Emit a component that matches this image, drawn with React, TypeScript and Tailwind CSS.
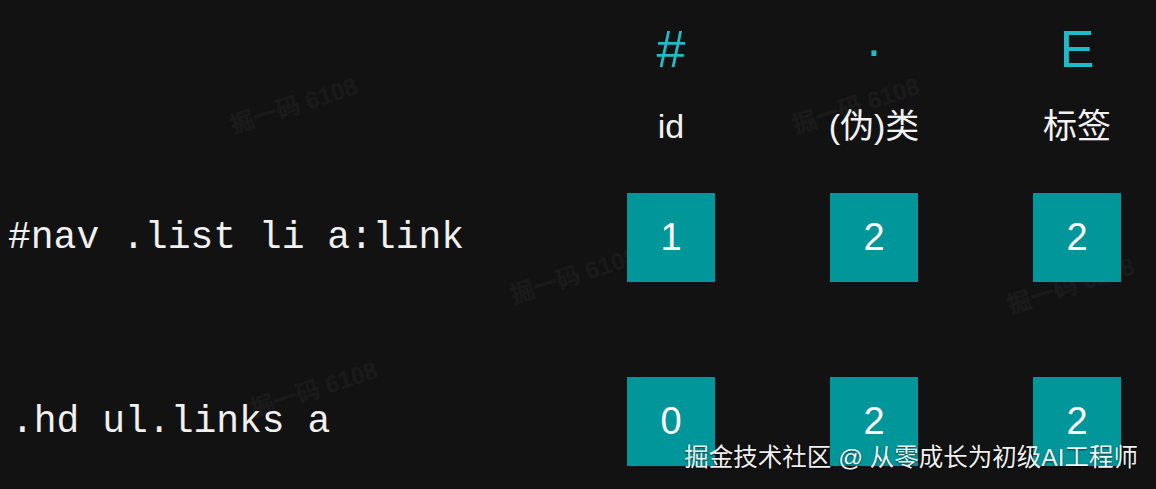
import React from 'react';

const cols = [
  { sym: '#', label: 'id' },
  { sym: '·', label: '(伪)类' },
  { sym: 'E', label: '标签' },
];

const rows = [
  { code: '#nav .list li a:link', vals: [1, 2, 2], pad: 'pl-[8px]' },
  { code: '.hd ul.links a', vals: [0, 2, 2], pad: 'pl-[11px]' },
];

// faint diagonal watermarks baked into the video frame
const marks = [
  'left-[228px] top-[88px]',
  'left-[508px] top-[258px]',
  'left-[790px] top-[88px]',
  'left-[1005px] top-[268px]',
  'left-[248px] top-[372px]',
];

const sans = "font-['Liberation_Sans','Noto_Sans_CJK_SC',sans-serif]";

export default function App() {
  return (
    <div className={`relative w-[1156px] h-[489px] overflow-hidden bg-[#121212] text-white ${sans}`}>
      {marks.map((m, i) => (
        <div
          key={i}
          className={`absolute ${m} -rotate-[18deg] text-[24px] font-bold text-white/[0.035] whitespace-nowrap select-none`}
        >
          掘一码 6108
        </div>
      ))}

      <div className="relative flex flex-col">
        {/* column headers */}
        <div className="flex pt-[21px]">
          <div className="flex-1" />
          <div className="flex gap-[115px] pr-[35px]">
            {cols.map((c) => (
              <div key={c.label} className="w-[88px] flex flex-col items-center">
                <div className="h-[56px] text-[52px] leading-[56px] text-[#1fbcc7]">{c.sym}</div>
                <div className="mt-[29px] h-[40px] text-[34px] leading-[40px] text-[#f2f2f2] whitespace-nowrap">
                  {c.label}
                </div>
              </div>
            ))}
          </div>
        </div>

        {/* selector rows */}
        <div className="flex flex-col gap-[95px] mt-[47px]">
          {rows.map((r) => (
            <div key={r.code} className="flex items-center">
              <div
                className={`flex-1 ${r.pad} text-[38px] leading-none text-[#f0f0f0] whitespace-pre font-['Liberation_Mono',monospace]`}
              >
                {r.code}
              </div>
              <div className="flex gap-[115px] pr-[35px]">
                {r.vals.map((v, i) => (
                  <div
                    key={i}
                    className="w-[88px] h-[89px] bg-[#00969a] flex items-center justify-center text-[38px] text-white"
                  >
                    {v}
                  </div>
                ))}
              </div>
            </div>
          ))}
        </div>
      </div>

      <div className="absolute right-[18px] bottom-[16px] text-[24.5px] leading-[30px] text-white/95 whitespace-nowrap [text-shadow:0_1px_2px_rgba(0,0,0,0.6)]">
        掘金技术社区 @ 从零成长为初级AI工程师
      </div>
    </div>
  );
}
